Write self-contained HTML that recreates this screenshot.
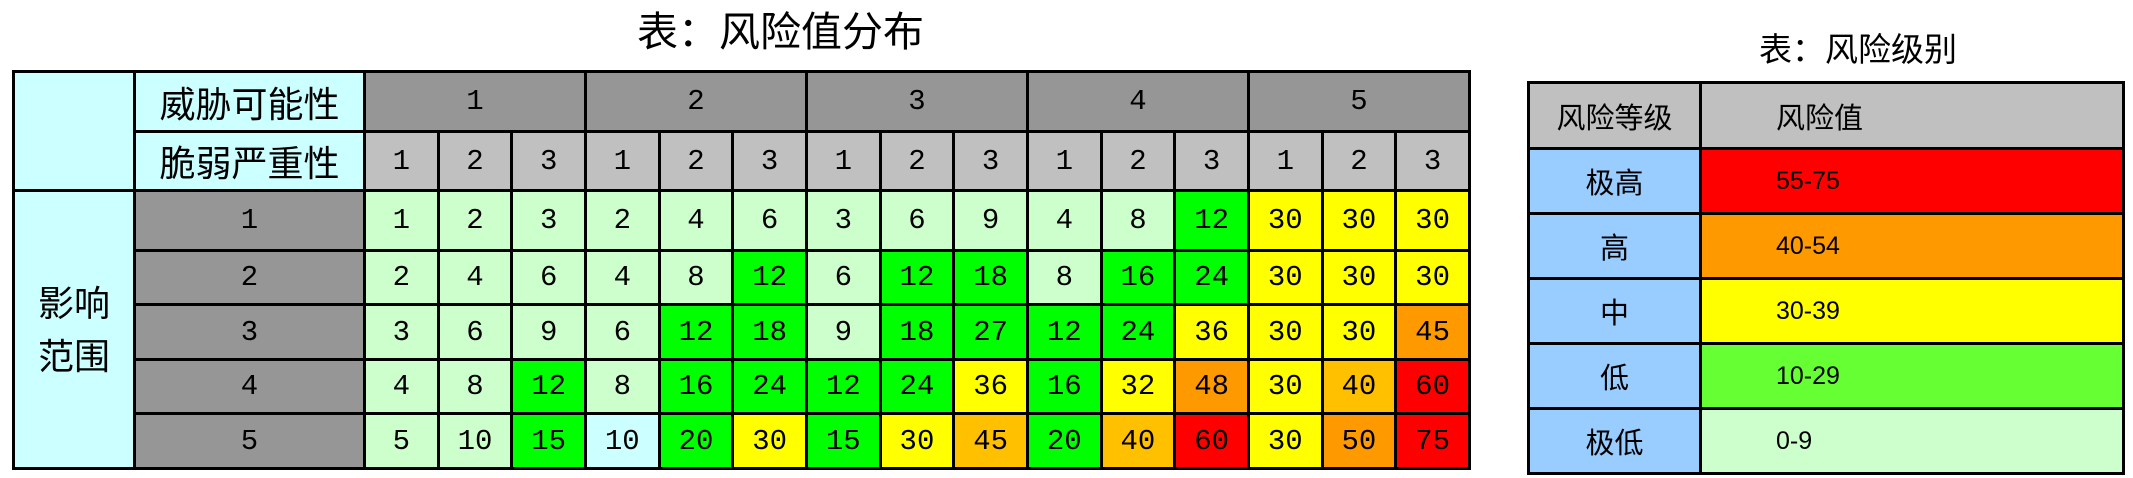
<!DOCTYPE html>
<html><head><meta charset="utf-8"><style>
*{margin:0;padding:0;box-sizing:border-box}
body{width:2133px;height:478px;background:#fff;position:relative;overflow:hidden;font-family:"Liberation Sans","Noto Sans CJK SC",sans-serif}
.t{position:absolute;font-family:"Liberation Sans","Noto Sans CJK SC",sans-serif;color:#000;white-space:nowrap}
table{position:absolute;border-collapse:collapse;table-layout:fixed}
td{border:3px solid #000;text-align:center;vertical-align:middle;padding:0;overflow:hidden;white-space:nowrap}
#m td{font-family:"Liberation Mono",monospace;font-size:29px}
#m td.h{font-family:"Liberation Sans","Noto Sans CJK SC",sans-serif;font-size:36px;background:#ccffff}
.L{background:#ccffcc}.G{background:#00ff00}.Y{background:#ffff00}.O{background:#ff9900}.A{background:#ffc000}.R{background:#ff0000}.C{background:#ccffff}.D{background:#969696}.S{background:#c0c0c0}
#r td{font-size:29px;font-family:"Liberation Sans","Noto Sans CJK SC",sans-serif}
#r td.v{text-align:left;padding-left:74px;font-size:25px}
#r td.lb{background:#99ccff}
</style></head><body>
<div class="t" style="left:637px;top:8px;font-size:41px;line-height:48px">表：风险值分布</div>
<div class="t" style="left:1759px;top:30px;font-size:33px;line-height:40px">表：风险级别</div>

<table id="m" style="left:12px;top:70px;width:1456px">
<colgroup><col style="width:121px"><col style="width:230px">
<col span="15" style="width:73.67px"></colgroup>
<tr style="height:60px"><td class="h" rowspan="2"></td><td class="h">威胁可能性</td><td class="D" colspan="3">1</td><td class="D" colspan="3">2</td><td class="D" colspan="3">3</td><td class="D" colspan="3">4</td><td class="D" colspan="3">5</td></tr>
<tr style="height:59px"><td class="h">脆弱严重性</td><td class="S">1</td><td class="S">2</td><td class="S">3</td><td class="S">1</td><td class="S">2</td><td class="S">3</td><td class="S">1</td><td class="S">2</td><td class="S">3</td><td class="S">1</td><td class="S">2</td><td class="S">3</td><td class="S">1</td><td class="S">2</td><td class="S">3</td></tr>
<tr style="height:60px"><td class="h" rowspan="5" style="line-height:53px">影响<br>范围</td><td class="D">1</td><td class="L">1</td><td class="L">2</td><td class="L">3</td><td class="L">2</td><td class="L">4</td><td class="L">6</td><td class="L">3</td><td class="L">6</td><td class="L">9</td><td class="L">4</td><td class="L">8</td><td class="G">12</td><td class="Y">30</td><td class="Y">30</td><td class="Y">30</td></tr>
<tr style="height:54px"><td class="D">2</td><td class="L">2</td><td class="L">4</td><td class="L">6</td><td class="L">4</td><td class="L">8</td><td class="G">12</td><td class="L">6</td><td class="G">12</td><td class="G">18</td><td class="L">8</td><td class="G">16</td><td class="G">24</td><td class="Y">30</td><td class="Y">30</td><td class="Y">30</td></tr>
<tr style="height:55px"><td class="D">3</td><td class="L">3</td><td class="L">6</td><td class="L">9</td><td class="L">6</td><td class="G">12</td><td class="G">18</td><td class="L">9</td><td class="G">18</td><td class="G">27</td><td class="G">12</td><td class="G">24</td><td class="Y">36</td><td class="Y">30</td><td class="Y">30</td><td class="O">45</td></tr>
<tr style="height:54px"><td class="D">4</td><td class="L">4</td><td class="L">8</td><td class="G">12</td><td class="L">8</td><td class="G">16</td><td class="G">24</td><td class="G">12</td><td class="G">24</td><td class="Y">36</td><td class="G">16</td><td class="Y">32</td><td class="O">48</td><td class="Y">30</td><td class="A">40</td><td class="R">60</td></tr>
<tr style="height:55px"><td class="D">5</td><td class="L">5</td><td class="L">10</td><td class="G">15</td><td class="C">10</td><td class="G">20</td><td class="Y">30</td><td class="G">15</td><td class="Y">30</td><td class="A">45</td><td class="G">20</td><td class="A">40</td><td class="R">60</td><td class="Y">30</td><td class="O">50</td><td class="R">75</td></tr>
</table>

<table id="r" style="left:1527px;top:81px;width:595px">
<colgroup><col style="width:172px"><col style="width:423px"></colgroup>
<tr style="height:66px"><td class="S">风险等级</td><td class="S v" style="font-size:29px">风险值</td></tr>
<tr style="height:65px"><td class="lb">极高</td><td class="v R">55-75</td></tr>
<tr style="height:65px"><td class="lb">高</td><td class="v O">40-54</td></tr>
<tr style="height:65px"><td class="lb">中</td><td class="v Y">30-39</td></tr>
<tr style="height:65px"><td class="lb">低</td><td class="v" style="background:#66ff33">10-29</td></tr>
<tr style="height:65px"><td class="lb">极低</td><td class="v L">0-9</td></tr>
</table>
</body></html>
